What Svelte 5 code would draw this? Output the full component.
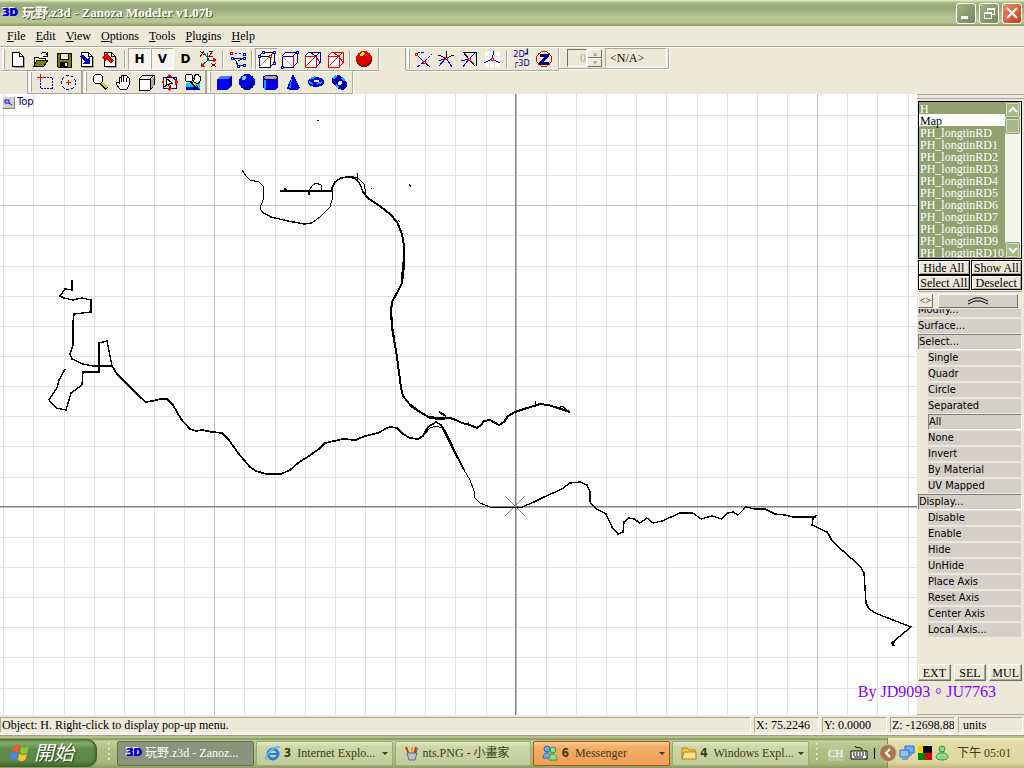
<script lang="ts">
  type Item = { icon: string; label: string; pressed?: boolean } | null;

  const menus = ["File", "Edit", "View", "Options", "Tools", "Plugins", "Help"];

  const page = '<path d="M3.500 2.500h7l4 4v10h-11z" fill="#fff" stroke="#000"/><path d="M10.500 2.500v4h4" fill="none" stroke="#000"/><path d="M15.500 7v10.500H5" fill="none" stroke="#aca899"/>';
  const cubeLines = (c: string) =>
    `<path d="M2 6h11v11H2zM2 6l4-4h11l-4 4M17 2v11l-4 4" fill="#fff" stroke="${c}"/>`;
  const dot = (x: number, y: number, c = "#f00") =>
    `<rect x="${x - 1}" y="${y - 1}" width="2" height="2" fill="#fff" stroke="${c}"/>`;

  const icons: Record<string, string> = {
    new: page,
    open: '<path d="M2 15V7h4l1 1h6v2" fill="#ffff80" stroke="#000"/><path d="M2 16l3-6h11l-4 6z" fill="#808000" stroke="#000"/><path d="M9 4c2-3 5-2 6 1M15 2v4h-4" fill="none" stroke="#000"/>',
    save: '<path d="M2 3h14v14H3l-1-1z" fill="#808000" stroke="#000"/><path d="M5 3h8v6H5z" fill="#ece9d8" stroke="#000"/><path d="M5 12h8v5H5z" fill="#000"/><path d="M10 13h2v3h-2z" fill="#fff"/>',
    import: page + '<path d="M1 6l4-1 4 4 3-2v7H5l2-3z" fill="#0000d0"/>',
    export: page + '<path d="M1 7l6-5v3l6 5-3 4-4-5-1 3z" fill="#e00000"/>',
    axes: '<path d="M8 11V3M8 11l-6 5M8 11l8-1M5 3l5 7" fill="none" stroke="#006060"/><path d="M14 8l3 2-3 2zM2 13v3h4" fill="red" stroke="red"/><path d="M1 1l4 4M5 1L1 7M10 1h4l-4 5h4M12 13l5 4M17 13l-5 4" fill="none" stroke="#900000"/>',
    nodes: '<path d="M3 3h13" stroke="#00f" stroke-dasharray="2 2"/><path d="M5 8h11M5 8l3 3 2 5 6-1M16 8l-6 3" fill="none" stroke="#000080"/>' + dot(3, 3) + dot(16, 4, "#00f") + dot(4, 8, "#00f") + dot(16, 8, "#00f") + dot(10, 16, "#00f") + dot(16, 15, "#00f"),
    cubeVertex: cubeLines("#000") + '<path d="M2 17L13 6" stroke="#888"/>' + dot(13, 6) + dot(17, 2, "#00f") + dot(17, 13, "#00f") + dot(2, 6, "#00f") + dot(6, 2, "#00f"),
    cubeEdge: cubeLines("#0000a0") + '<path d="M2 6l11 11" stroke="#aaa"/><path d="M13 6v11" stroke="red"/>' + dot(2, 17, "#00f") + dot(17, 2, "#00f"),
    cubeFace: cubeLines("#000080") + '<path d="M2 6h11v11H2zM2 17L13 6" fill="none" stroke="red"/><path d="M13 6l4 7M6 2l7 4" stroke="#000080"/>',
    cubeObject: cubeLines("red") + '<path d="M2 17L13 6l4 7M6 2l7 4" fill="none" stroke="red"/>',
    ball: '<circle cx="9" cy="9" r="8" fill="#e00000"/><path d="M2 13a8 8 0 0014 0 8 8 0 001-5c-3 8-9 9-15 5z" fill="#800000"/><path d="M4 5l3-3 3 1-2 3H5z" fill="#ff0"/>',
    snap1: '<path d="M2 4l4-2h4M10 12l8-8M3 17l7-5" fill="none" stroke="#00f" stroke-dasharray="4 1"/><path d="M3 5l7 7 6 5" fill="none" stroke="#000080"/>' + dot(2, 4) + dot(10, 12),
    snap2: '<path d="M1 5l8 3 8-3M9 1v7" fill="none" stroke="#000"/><path d="M2 11l7-3M2 16l7-8 6 9" fill="none" stroke="#00f"/>' + dot(9, 8),
    snap3: '<path d="M3 2h13v14M4 4l5 5M9 9l6 7M3 2l6 7" fill="none" stroke="#000"/><path d="M1 11l8-2 7-7M9 9l-6 8" fill="none" stroke="#00f"/>' + dot(9, 9),
    snap4: '<path d="M2 2h15v15H2z" fill="#fff"/><path d="M6 2v15M11 2v15M2 6h15M2 12h15" stroke="#e8e4d4"/><path d="M9 9l2-8M9 9l-8 4M9 9l8 4" fill="none" stroke="#00f"/>' + dot(9, 9),
    zmod: '<circle cx="9" cy="9" r="7.500" fill="none" stroke="red"/><path d="M5 4h9v2l-6 6h6v3H4v-3l6-5H5z" fill="#000080"/>',
    selRect: '<path d="M4.500 4.500h12v11h-12z" fill="none" stroke="#0000a0" stroke-dasharray="2 1"/><path d="M4.500 1v7M1 4.500h7" stroke="red"/>',
    selCircle: '<circle cx="9.500" cy="9.500" r="7" fill="none" stroke="#0000a0" stroke-dasharray="3 2"/><path d="M9.500 7v5M7 9.500h5" stroke="red"/>',
    zoom: '<circle cx="7" cy="6" r="5" fill="#fff" stroke="#000"/><path d="M10 10l6 6" stroke="#000" stroke-width="4"/><path d="M11 10l5 5" stroke="#cc0" stroke-width="2"/>',
    hand: '<path d="M6 16L2 11l1-2 2 1V5l2-1V3l2-1 2 0 2 1v1l2 1v7l-2 4z" fill="#fff" stroke="#000"/><path d="M7.500 4v5M9.500 3v6M12.500 5v4" stroke="#000"/>',
    cube: '<path d="M2 6l4-4h11v10l-4 5H2z" fill="#fff" stroke="#000"/><path d="M14 7l3-4v9l-3 4z" fill="#aca899"/><path d="M2 6h11v11M13 6l4-4" fill="none" stroke="#000"/>',
    fit: '<path d="M3 4h13v11H3zM3 15l4-3M12 4l4 3" fill="none" stroke="#000080"/><path d="M6 4l3-3 3 3zM6 15l3 3 3-3zM4 6L1 9l3 3zM15 6l3 3-3 3z" fill="red"/><path d="M6 5v8l2-2 2 4 1-1-2-4h3z" fill="#fff" stroke="#000"/>',
    render: '<path d="M3 10h14v7H3z" fill="#0cf"/><path d="M3 14h9l5 2v1H3z" fill="#0000c0"/><circle cx="6" cy="5" r="4" fill="#fff" stroke="#000"/><path d="M8 8l6 7" stroke="#000" stroke-width="3"/><path d="M9 8l5 6" stroke="#dd0" stroke-width="1"/><path d="M11 9L9 6l1-1 1 1V2l1 1 1-2 1 1 1-1 1 2 1 0v5l-2 3z" fill="#fff" stroke="#000"/>',
    box: '<path d="M2 6l4-3h11v9l-4 5H2z" fill="#0000a8"/><path d="M2 6h11v11H2z" fill="#00f"/><path d="M6 3h11l-4 3H2z" fill="#4080ff"/>',
    sphere: '<circle cx="9" cy="9" r="8" fill="#0000e0"/><path d="M3 14c6 2 11-1 13-8a8 8 0 01-13 8z" fill="#000080"/><circle cx="6" cy="5" r="2" fill="#80d0ff"/>',
    cylinder: '<path d="M2 4v11c2 3 13 3 15 0V4z" fill="#0000e0"/><path d="M4 7v9" stroke="#0af" stroke-width="2"/><ellipse cx="9.500" cy="4.500" rx="7" ry="2.500" fill="#aca899" stroke="#00008b"/>',
    cone: '<path d="M9 1l7 14c-2 3-12 3-13 0z" fill="#0000e0"/><path d="M8 4L5 15h2z" fill="#0af"/>',
    torus: '<ellipse cx="9" cy="9" rx="8" ry="5" fill="#0000c8"/><path d="M3 6l5-2M2 9l4 2M10 11l5-2" stroke="#0af" stroke-width="2"/><ellipse cx="9" cy="8" rx="3" ry="1" fill="#ece9d8"/>',
    knot: '<path d="M5 3l4-1 8 7v4l-4 4-5-1-6-7V5z" fill="#0000b0"/><path d="M3 6l3-3M6 12l3 3M12 5l3 3" stroke="#0af" stroke-width="2"/><circle cx="10" cy="10" r="2" fill="#ece9d8"/>',
  };

  const fileBar: Item[] = [
    { icon: "new", label: "New" },
    { icon: "open", label: "Open" },
    { icon: "save", label: "Save" },
    { icon: "import", label: "Import" },
    { icon: "export", label: "Export" },
    null,
    { icon: "H", label: "Horizontal", pressed: true },
    { icon: "V", label: "Vertical", pressed: true },
    { icon: "D", label: "Depth" },
    { icon: "axes", label: "Axes" },
    null,
    { icon: "nodes", label: "Nodes" },
    null,
    { icon: "cubeVertex", label: "Vertices level", pressed: true },
    { icon: "cubeEdge", label: "Edges level" },
    { icon: "cubeFace", label: "Faces level" },
    { icon: "cubeObject", label: "Objects level" },
    null,
    { icon: "ball", label: "Material editor" },
  ];
  const snapBar: Item[] = [
    { icon: "snap1", label: "Snap to vertex" },
    { icon: "snap2", label: "Snap to edge" },
    { icon: "snap3", label: "Snap to face" },
    { icon: "snap4", label: "Snap to grid" },
    null,
    { icon: "2D", label: "2D / 3D" },
    { icon: "zmod", label: "Zanoza" },
  ];
  const selectBar: Item[] = [
    { icon: "selRect", label: "Rectangle selection" },
    { icon: "selCircle", label: "Circle selection" },
  ];
  const viewBar: Item[] = [
    { icon: "zoom", label: "Zoom" },
    { icon: "hand", label: "Pan" },
    { icon: "cube", label: "Rotate" },
    { icon: "fit", label: "Fit" },
    { icon: "render", label: "Render" },
  ];
  const primBar: Item[] = [
    { icon: "box", label: "Box" },
    { icon: "sphere", label: "Sphere" },
    { icon: "cylinder", label: "Cylinder" },
    { icon: "cone", label: "Cone" },
    { icon: "torus", label: "Torus" },
    { icon: "knot", label: "Knot" },
  ];

  const objects = ["H", "Map", "PH_longtinRD"];
  for (let i = 1; i <= 10; i++) objects.push("PH_longtinRD" + i);
  let selected = $state(objects.filter((o) => o !== "Map"));

  const commands = [
    { text: "Modify..." },
    { text: "Surface..." },
    { text: "Select...", open: true },
    ...["Single", "Quadr", "Circle", "Separated"].map((text) => ({ text, sub: true })),
    { text: "All", sub: true, open: true },
    ...["None", "Invert", "By Material", "UV Mapped"].map((text) => ({ text, sub: true })),
    { text: "Display...", open: true },
    ...["Disable", "Enable", "Hide", "UnHide", "Place Axis", "Reset Axis", "Center Axis", "Local Axis..."].map(
      (text) => ({ text, sub: true }),
    ),
  ] as { text: string; sub?: boolean; open?: boolean }[];

  // grid lines of the top view, in view units
  const gridX = [3, 33, 64, 94, 124, 154, 184, 244, 275, 305, 335, 365, 395, 425, 455, 486, 546, 576, 606, 636, 666, 697, 727, 757, 787, 847, 877, 908];
  const gridY = [115, 145, 175, 235, 266, 296, 326, 356, 386, 416, 446, 477, 537, 567, 597, 627, 657, 688];

  const thinRoads = [
    "242,170 246,176 250,180 259,182 263,186 264,192 263,200 260,208 262,212 271,217 288,221 304,224 312,223 320,217 330,207 332,200 332,188 335,182 341,178 350,176 358,178 364,184 366,193",
    "309,191 312,186 316,183 321,185 321,191",
    "403,396 409,403 418,410 428,416 440,418 447,417",
    "423,436 430,428 436,426 442,428",
    "357,173 358,180",
    "468,425 469,422",
    "535,405 536,401",
    "559,408 562,406 570,412",
    "398,220 400,222",
    "409,184 411,187",
    "317,120 319,120",
    "371,188 372,188",
    "442,428 455,454 464,470 470,480 474,491 475,498 480,503 490,507 522,507",
  ];
  const roads = [
    "262,212 271,217 288,221 304,224 312,223",
    "332,192 332,188 335,182 341,178 350,177 356,179 360,184 363,192 368,198",
    "522,507 534,502 544,497 562,489 570,483 580,482 587,485 590,492 590,502 595,508 606,514 612,527 618,534 623,532 624,522 629,518 634,519 640,523 647,518 653,523 662,521 680,513 693,513 701,519 712,516 722,519 728,513 733,512 738,515 746,507 755,509 765,509 775,514 785,515 793,517 815,517 816,515 813,519 812,525 827,532 832,541 843,551 860,566 864,573 866,603 869,609 875,613 911,627 894,641",
    "72,280 72,290 65,289 60,296 64,298 73,300 82,298 91,300 91,312 74,314 73,322 73,345 70,354 72,359 83,364 93,366 112,366",
    "66,369 64,371 59,380 57,388 49,400 56,408 66,410 71,393 82,385 83,372 99,372 99,343 107,341 112,366",
  ];
  const wideRoads = [
    "112,366 117,374 126,383 134,391 141,398 146,402 153,401 160,399 167,399 173,405 181,419 190,429 196,431 202,430 212,432 222,433 229,440 238,453 250,467 256,471 266,474 281,474 290,470 298,463 309,456 319,449 325,443 334,441 343,439 356,440 365,436 378,433 387,428 391,427 397,428 403,434 410,438 418,439 423,436 428,427 436,422 441,425 446,433 455,452 464,470",
  ];
  const thickRoads = [
    "280,191 333,191",
    "284,189 287,190",
    "309,191 309,195",
    "363,192 368,198 381,207 390,214 397,222 402,234 404,246 404,266 402,283 398,291 392,302 391,312 392,328 397,357 401,388 403,396 411,406 420,412 430,418 440,419 450,418 456,420 462,423 470,425 477,428 481,425 484,421 490,420 499,425 504,422 508,416 515,412 524,409 534,406 540,404 548,405 558,408 570,412",
    "403,262 402,282",
    "391,306 392,326 397,357",
    "439,412 446,416",
    "418,439 423,436 428,427",
    "441,425 446,433 455,452",
    "828,533 832,541",
    "895,641 892,643 894,646",
  ];
</script>

{#snippet glyph(name: string)}
  <svg width="19" height="19" viewBox="0 0 19 19" shape-rendering="crispEdges" aria-hidden="true">
    {@html icons[name]}
  </svg>
{/snippet}

{#snippet band(items: Item[])}
  <div class="band">
    <span class="grip"></span>
    {#each items as item}
      {#if !item}
        <span class="sep"></span>
      {:else}
        <button class="tool" class:pressed={item.pressed} aria-label={item.label} title={item.label}>
          {#if item.icon === "2D"}
            <span class="dims">2D&#9499;<br />&#9484;3D</span>
          {:else if item.icon.length === 1}
            <b>{item.icon}</b>
          {:else}
            {@render glyph(item.icon)}
          {/if}
        </button>
      {/if}
    {/each}
  </div>
{/snippet}

{#snippet logo()}
  <span class="logo">3D</span>
{/snippet}

<div class="desktop">
  <header class="title">
    {@render logo()}
    <h1>玩野.z3d - Zanoza Modeler v1.07b</h1>
    <div class="winbtns">
      <button aria-label="Minimize">
        <svg width="18" height="18" viewBox="0 0 18 18"><path d="M4 12h7v3H4z" fill="#fff" /></svg>
      </button>
      <button aria-label="Restore">
        <svg width="18" height="18" viewBox="0 0 18 18" fill="none" stroke="#fff" shape-rendering="crispEdges">
          <path d="M7 7V4h7v6h-3M7 5h7M4 8h7v6H4zM4 9h7" />
        </svg>
      </button>
      <button class="close" aria-label="Close">
        <svg width="18" height="18" viewBox="0 0 18 18"><path d="M4 4l10 10M14 4L4 14" stroke="#fff" stroke-width="2" /></svg>
      </button>
    </div>
  </header>

  <nav class="menu">
    {#each menus as m}
      <button><u>{m[0]}</u>{m.slice(1)}</button>
    {/each}
  </nav>

  <div class="toolbars">
    <div class="bar first">
      {@render band(fileBar)}
      <div class="space"></div>
      {@render band(snapBar)}
      <div class="band fields">
        <input class="num" value="0" aria-label="Value" disabled />
        <span class="spin">
          <button aria-label="Up">&#9652;</button>
          <button aria-label="Down">&#9662;</button>
        </span>
        <output class="na">&lt;N/A&gt;</output>
      </div>
    </div>
    <div class="bar second">
      {@render band(selectBar)}
      {@render band(viewBar)}
      {@render band(primBar)}
    </div>
  </div>

  <main class="work">
    <div class="view">
      <svg class="canvas" viewBox="0 94 917 621" preserveAspectRatio="xMinYMin slice" shape-rendering="crispEdges">
        {#each gridX as x}<rect {x} y="94" width="1" height="621" fill="#e2e2e2" />{/each}
        {#each gridY as y}<rect x="0" {y} width="917" height="1" fill="#e2e2e2" />{/each}
        <path d="M214.500 94V715M817.500 94V715M0 205.500H917" stroke="#c0c0c0" />
        <path d="M516.500 94V715M0 507.500H917" stroke="#c0c0c0" />
        <path d="M515.500 94V715M0 506.500H917" stroke="#808080" />
        <path d="M505 496l20 20M525 496l-20 20" stroke="#808080" />
        {#each thinRoads as points}<polyline {points} class="road" />{/each}
        {#each roads as points}<polyline {points} class="road medium" />{/each}
        {#each wideRoads as points}<polyline {points} class="road wide" />{/each}
        {#each thickRoads as points}<polyline {points} class="road thick" />{/each}
      </svg>
      <div class="viewname">
        <button aria-label="Maximize view">
          <svg width="10" height="10" viewBox="0 0 10 10" fill="none" stroke="#00f"><path d="M2 3h4v3H2zM6 6l3 2" /></svg>
        </button>
        Top
      </div>
    </div>

    <aside class="side">
      <div class="objects">
        <select multiple bind:value={selected} aria-label="Objects">
          {#each objects as o}<option value={o}>{o}</option>{/each}
        </select>
        <div class="scroll">
          <button aria-label="Scroll up">
            <svg width="12" height="12" viewBox="0 0 12 12"><path d="M2 8l4-4 4 4" fill="none" stroke="#fff" stroke-width="2" /></svg>
          </button>
          <span class="thumb"></span>
          <button aria-label="Scroll down">
            <svg width="12" height="12" viewBox="0 0 12 12"><path d="M2 4l4 4 4-4" fill="none" stroke="#fff" stroke-width="2" /></svg>
          </button>
        </div>
      </div>
      <div class="objbtns">
        <button>Hide All</button>
        <button>Show All</button>
        <button>Select All</button>
        <button>Deselect</button>
      </div>
      <div class="roll">
        <button class="swap">&lt;&gt;</button>
        <button class="up" aria-label="Scroll commands up">
          <svg width="22" height="9" viewBox="0 0 22 9" fill="none" stroke="#000">
            <path d="M1 5l7-3h6l7 3M1 8l7-3h6l7 3" />
          </svg>
        </button>
      </div>
      <div class="commands">
        {#each commands as c}
          <button class:sub={c.sub} class:open={c.open}>{c.text}</button>
        {/each}
      </div>
      <div class="modes">
        <button>EXT</button>
        <button>SEL</button>
        <button>MUL</button>
      </div>
    </aside>
    <p class="credit">By JD9093。JU7763</p>
  </main>

  <footer class="status">
    <span class="hint">Object: H. Right-click to display pop-up menu.</span>
    <span>X: 75.2246</span>
    <span>Y: 0.0000</span>
    <span>Z: -12698.884</span>
    <span class="units">units</span>
  </footer>

  <div class="taskbar">
    <button class="start">
      <svg width="20" height="20" viewBox="0 0 20 20">
        <path d="M4 3c3-2 5-1 6 0L9 9C7 8 5 8 2 9z" fill="#f0582a" />
        <path d="M11 4c2 1 5 1 8-1l-2 7c-3 1-5 1-7 0z" fill="#8cc63f" />
        <path d="M1 10c3-1 5-1 7 0l-1 7c-2-1-5-1-7 0z" fill="#4a86e8" />
        <path d="M9 11c2 1 5 1 8 0l-2 6c-3 2-5 1-7 0z" fill="#fbc726" />
      </svg>
      開始
    </button>
    <span class="dots"></span>
    <div class="tasks">
      <button class="task active">{@render logo()}<span>玩野.z3d - Zanoz...</span></button>
      <button class="task">
        <svg width="16" height="16" viewBox="0 0 16 16" fill="none">
          <circle cx="8" cy="9" r="5" stroke="#2b7fd0" stroke-width="3" />
          <path d="M4 9h9" stroke="#2b7fd0" stroke-width="2" />
          <path d="M1 15C0 9 9 1 15 2" stroke="#6bb8f0" stroke-width="2" />
        </svg>
        <span><b>3</b>&nbsp; Internet Explo...</span><i></i>
      </button>
      <button class="task">
        <svg width="16" height="16" viewBox="0 0 16 16">
          <path d="M6 12L2 2M12 2l-2 10" stroke="#d03010" stroke-width="2" />
          <path d="M8 12V2" stroke="#e8a020" stroke-width="2" />
          <path d="M10 12l4-9" stroke="#3060c0" />
          <path d="M3 8h10l-2 7H5z" fill="#b4c4d8" stroke="#667" />
        </svg>
        <span>nts.PNG - 小畫家</span>
      </button>
      <button class="task alert">
        <svg width="16" height="16" viewBox="0 0 16 16">
          <circle cx="5" cy="4" r="3" fill="#6ab0e8" stroke="#2a6cb0" />
          <path d="M1 13c0-7 8-7 8 0z" fill="#6ab0e8" stroke="#2a6cb0" />
          <circle cx="11" cy="5" r="3" fill="#90dd88" stroke="#389038" />
          <path d="M7 15c0-8 8-8 8 0z" fill="#90dd88" stroke="#389038" />
        </svg>
        <span><b>6</b>&nbsp; Messenger</span><i></i>
      </button>
      <button class="task">
        <svg width="16" height="16" viewBox="0 0 16 16">
          <path d="M1 13V3h5l2 2h6v8z" fill="#f4c64a" stroke="#b08010" />
          <path d="M1 14l2-7h12v7z" fill="#ffe28a" stroke="#b08010" />
        </svg>
        <span><b>4</b>&nbsp; Windows Expl...</span><i></i>
      </button>
    </div>
    <span class="dots"></span>
    <div class="lang">
      <span class="ch">CH</span>
      <svg width="18" height="16" viewBox="0 0 18 16">
        <path d="M5 1c0 3 7 0 7 4" fill="none" stroke="#000" />
        <path d="M1 6h16v8H1z" fill="#fff" stroke="#000" />
        <path d="M3 8h13M3 10h13" stroke="#000" stroke-dasharray="2 1" />
        <path d="M4 12h9" stroke="#000" />
      </svg>
      <span class="bar-mark"></span>
    </div>
    <div class="tray">
      <button class="expand" aria-label="Show hidden icons">
        <svg width="10" height="10" viewBox="0 0 10 10"><path d="M7 1L3 5l4 4" fill="none" stroke="#fff" stroke-width="2" /></svg>
      </button>
      <svg width="16" height="16" viewBox="0 0 16 16">
        <path d="M6 1h9v7H6zM9 10h4" fill="#6cb0ff" stroke="#3068c0" />
        <path d="M1 5h9v7H1zM3 14h6" fill="#8cc8ff" stroke="#3068c0" />
      </svg>
      <svg width="14" height="14" viewBox="0 0 14 14">
        <path d="M0 0h5v7H0z" fill="#fc0" /><path d="M5 0h9v7H5z" fill="#000" />
        <path d="M0 7h7v7H0z" fill="#080" /><path d="M7 7h7v7H7z" fill="#e00000" />
      </svg>
      <svg width="14" height="16" viewBox="0 0 14 16">
        <circle cx="7" cy="4" r="3" fill="#8cd88c" stroke="#389038" />
        <path d="M1 12c0-2 3-5 6-4 3-1 6 2 6 4 0 4-12 4-12 0z" fill="#8cd88c" stroke="#389038" />
      </svg>
      <time>下午 05:01</time>
    </div>
  </div>
</div>

<style>
  :global(body) {
    margin: 0;
    background: #ece9d8;
  }

  .desktop {
    display: flex;
    flex-direction: column;
    height: 100vh;
    overflow: hidden;
    background: #ece9d8;
    color: #000;
    font: 12px/14px "Liberation Serif", "Noto Sans CJK TC", serif;
  }

  button,
  input,
  select {
    box-sizing: border-box;
    margin: 0;
    padding: 0;
    border: 0;
    border-radius: 0;
    background: none;
    color: inherit;
    font: inherit;
  }

  svg {
    display: block;
    flex: none;
  }

  .title {
    display: flex;
    align-items: center;
    gap: 4px;
    box-sizing: border-box;
    height: 26px;
    padding: 0 2px;
    background: linear-gradient(#e4f0c0 0, #a5b483 3px, #97a679 7px, #b5c490 17px, #b9c693 22px, #8b9a68 26px);
  }

  h1 {
    flex: 1;
    margin: 0;
    color: #fff;
    font-size: 13px;
    font-weight: bold;
    text-shadow: 1px 1px 0 #4d5a30;
  }

  .logo {
    flex: none;
    width: 16px;
    color: #0000d8;
    font: bold 10px/12px "DejaVu Sans", sans-serif;
    text-shadow: 1px 0 0 #0000d8, -1px -1px 0 #fff;
  }

  .winbtns {
    display: flex;
    gap: 3px;
  }

  .winbtns button {
    width: 20px;
    height: 21px;
    border: 1px solid #fff;
    border-radius: 3px;
    background: linear-gradient(135deg, #a3b184, #75875a);
  }

  .winbtns .close {
    background: linear-gradient(135deg, #ec8a6a, #c83c18);
  }

  .menu {
    display: flex;
    height: 20px;
    padding-left: 2px;
    border-bottom: 1px solid #aca899;
    box-shadow: 0 1px #fff;
  }

  .menu button {
    padding: 0 5px;
  }

  .toolbars {
    margin-top: 1px;
  }

  .bar {
    display: flex;
    align-items: flex-start;
    height: 23px;
  }

  .band {
    display: flex;
    align-items: center;
    box-sizing: border-box;
    height: 23px;
    padding-right: 2px;
    border-right: 1px solid #aca899;
    border-bottom: 1px solid #aca899;
    box-shadow: 1px 1px 0 #fff;
  }

  .grip {
    width: 2px;
    height: 20px;
    margin: 0 2px 0 1px;
    border-right: 1px solid #aca899;
    background: #fff;
  }

  .first {
    padding-left: 1px;
  }

  .second {
    padding-left: 27px;
  }

  .second .band {
    border-left: 1px solid #aca899;
    padding-right: 1px;
  }

  .space {
    width: 26px;
    border-right: 1px solid #aca899;
    height: 22px;
  }

  .sep {
    width: 1px;
    height: 18px;
    margin: 0 3px 0 2px;
    background: #aca899;
    box-shadow: 1px 0 #fff;
  }

  .tool {
    display: grid;
    place-items: center;
    width: 23px;
    height: 22px;
  }

  .tool.pressed {
    border: 1px solid;
    border-color: #aca899 #fff #fff #aca899;
    background: #f6f4ec;
  }

  .tool b {
    font: bold 12px/14px "DejaVu Sans", sans-serif;
  }

  .dims {
    color: #000080;
    font: 9px/9px "DejaVu Sans Condensed", sans-serif;
    white-space: nowrap;
  }

  .fields {
    height: 21px;
    padding: 0 1px 0 8px;
  }

  .num {
    width: 20px;
    height: 18px;
    border: 1px solid;
    border-color: #716f64 #fff #fff #716f64;
    color: #aca899;
    text-align: right;
  }

  .spin {
    display: grid;
    width: 15px;
    margin-right: 3px;
  }

  .spin button {
    height: 9px;
    border: 1px solid;
    border-color: #fff #716f64 #716f64 #fff;
    color: #aca899;
    font-size: 8px;
    line-height: 6px;
  }

  .na {
    box-sizing: border-box;
    width: 62px;
    height: 20px;
    padding: 2px 4px;
    border: 1px solid;
    border-color: #aca899 #fff #fff #aca899;
  }

  .work {
    position: relative;
    display: flex;
    flex: 1;
    min-height: 0;
  }

  .view {
    position: relative;
    flex: 1;
    min-width: 0;
    overflow: hidden;
    background: #fff;
  }

  .canvas {
    width: 100%;
    height: 100%;
  }

  .road {
    fill: none;
    stroke: #000;
    stroke-width: 1;
  }

  .medium {
    stroke-width: 1.4;
  }

  .wide {
    stroke-width: 1.7;
  }

  .thick {
    stroke-width: 2;
  }

  .viewname {
    position: absolute;
    top: 1px;
    left: 2px;
    display: flex;
    align-items: center;
    gap: 2px;
    color: #000080;
    font: 11px/14px "DejaVu Sans Condensed", sans-serif;
  }

  .viewname button {
    width: 13px;
    height: 13px;
    border: 1px solid;
    border-color: #fff #808080 #808080 #fff;
    background: #d4d0c8;
  }

  .side {
    display: flex;
    flex-direction: column;
    box-sizing: border-box;
    width: 107px;
    padding: 6px 2px 2px 1px;
    border-top: 1px solid #aca899;
    border-bottom: 1px solid #aca899;
    background: linear-gradient(#aca899, #aca899) 0 3px / 100% 1px no-repeat #ece9d8;
  }

  .objects {
    display: flex;
    box-sizing: border-box;
    height: 158px;
    flex: none;
    border: 1px solid #000;
    background: #fff;
  }

  .objects select {
    flex: 1;
    min-width: 0;
    height: 156px;
    overflow: hidden;
    outline: none;
  }

  .objects option {
    min-height: 12px;
    height: 12px;
    padding: 0 0 0 1px;
    font-size: 12px;
    line-height: 10px;
  }

  .objects option:checked {
    background-image: linear-gradient(#93a070, #93a070);
    -webkit-text-fill-color: #fff;
  }

  .scroll {
    display: flex;
    flex-direction: column;
    width: 16px;
    background: #f4f4ee;
  }

  .scroll button,
  .thumb {
    display: grid;
    box-sizing: border-box;
    place-items: center;
    width: 15px;
    height: 16px;
    border: 1px solid #8f9d71;
    border-radius: 2px;
    background: #a8b68a;
    box-shadow: inset 0 0 0 1px #d4deb8;
  }

  .scroll button:last-child {
    margin-top: auto;
  }

  .objbtns {
    display: grid;
    grid-template-columns: 1fr 1fr;
    gap: 0 1px;
    flex: none;
    margin-top: 1px;
    padding-bottom: 1px;
    border-bottom: 1px solid #aca899;
  }

  .objbtns button {
    height: 15px;
    border: 1px solid #000;
    box-shadow: inset 1px 1px #fff, inset -1px -1px #aca899;
    line-height: 12px;
    white-space: nowrap;
  }

  .roll {
    display: flex;
    align-items: center;
    gap: 5px;
    flex: none;
    height: 17px;
    padding-right: 4px;
  }

  .roll button {
    height: 14px;
    border: 1px solid;
    border-color: #fff #716f64 #716f64 #fff;
    font-size: 10px;
    line-height: 10px;
  }

  .swap {
    width: 15px;
  }

  .roll .up {
    display: grid;
    flex: 1;
    place-items: center;
    background: #d4d0c8;
  }

  .commands {
    display: flex;
    flex: 1;
    flex-direction: column;
    justify-content: flex-start;
    min-height: 0;
    overflow: hidden;
  }

  .commands button {
    flex: none;
    height: 16px;
    border: 1px solid #ece9d8;
    border-width: 1px 1px 1px 0;
    background: #d4d0c8;
    font: 11px/14px "DejaVu Sans Condensed", sans-serif;
    text-align: left;
  }

  .commands button:first-child {
    margin-top: -7px;
  }

  .commands .sub {
    margin-left: 10px;
  }

  .commands .open {
    border-width: 1px;
    border-color: #808080 #fff #fff #808080;
  }

  .modes {
    display: grid;
    grid-template-columns: 1fr 1fr 1fr;
    gap: 3px;
    flex: none;
    margin-bottom: 31px;
  }

  .modes button {
    height: 17px;
    border: 1px solid;
    border-color: #fff #716f64 #716f64 #fff;
    box-shadow: inset -1px -1px #aca899;
    line-height: 14px;
  }

  .credit {
    position: absolute;
    right: 28px;
    bottom: 13px;
    margin: 0;
    color: #8000ff;
    font-size: 16px;
    line-height: 20px;
  }

  .status {
    display: flex;
    gap: 3px;
    box-sizing: border-box;
    height: 20px;
    padding: 2px 1px 1px 0;
    border-bottom: 1px solid #fff;
  }

  .status span {
    box-sizing: border-box;
    flex: none;
    width: 65px;
    overflow: hidden;
    padding: 0 1px;
    border: 1px solid;
    border-color: #aca899 #fff #fff #aca899;
    white-space: nowrap;
  }

  .status .hint {
    flex: 1;
  }

  .status .units {
    padding-left: 4px;
  }

  .taskbar {
    display: flex;
    align-items: center;
    box-sizing: border-box;
    height: 33px;
    padding-top: 3px;
    background: linear-gradient(#8c8e70 0, #c5d09c 2px, #7f9158 4px, #c5d09c 6px, #b2bf88 14px, #a9b77e 28px, #8c9c62 33px);
    color: #3b3c10;
  }

  .start {
    display: flex;
    align-items: center;
    gap: 4px;
    flex: none;
    width: 97px;
    height: 28px;
    padding-left: 10px;
    border-radius: 0 10px 10px 0;
    background: linear-gradient(#4c7a38, #86ac6c 4px, #5f8c4a 10px, #5c8647 22px, #3d6328);
    box-shadow: inset -2px 0 2px #3d6328;
    color: #fff;
    font-size: 20px;
    font-style: italic;
    line-height: 26px;
    text-shadow: 1px 1px 1px #234010;
  }

  .dots {
    flex: none;
    width: 5px;
    height: 20px;
    margin: 0 4px 0 11px;
    background: radial-gradient(circle at 1px 1px, #e2e8c4 1px, #7d8d54 2px, transparent 2px) 0 0 / 5px 5px;
  }

  .tasks {
    display: flex;
    gap: 2px;
    flex: 1;
    min-width: 0;
  }

  .tasks + .dots {
    margin: 0 7px;
  }

  .task {
    display: flex;
    align-items: center;
    gap: 3px;
    flex: 1 1 0;
    min-width: 0;
    height: 25px;
    padding: 0 4px 0 8px;
    border: 1px solid #9dab76;
    border-radius: 2px;
    background: linear-gradient(#e2e8c4, #ccd6a8 5px, #c1cb9b);
    text-align: left;
    white-space: nowrap;
  }

  .task span:not(.logo) {
    flex: 1;
    overflow: hidden;
  }

  .task b {
    font: bold 12px/14px "DejaVu Sans Condensed", sans-serif;
  }

  .task i {
    border: 3px solid transparent;
    border-top-color: #3b3c10;
    border-bottom: 0;
  }

  .task.active {
    border-color: #66704e;
    background: #8b947a;
    color: #fff;
  }

  .task.alert {
    border: 1px solid #b0560a;
    background: linear-gradient(#fbd09a, #f5ad68 5px, #f0a058);
  }

  .lang {
    display: flex;
    align-items: center;
    gap: 6px;
    flex: none;
    width: 59px;
  }

  .ch {
    width: 16px;
    background: #b9c59a;
    color: #fff;
    font-size: 11px;
    line-height: 16px;
  }

  .bar-mark {
    width: 1px;
    height: 11px;
    background: #000;
  }

  .tray {
    display: flex;
    align-items: center;
    gap: 3px;
    box-sizing: border-box;
    flex: none;
    width: 137px;
    height: 30px;
    border-left: 1px solid #7d8d54;
    background: linear-gradient(#f2ecc0, #e2dcaa 5px, #ded7a2 24px, #c0b680);
  }

  .expand {
    display: grid;
    place-items: center;
    flex: none;
    width: 16px;
    height: 16px;
    margin-left: -8px;
    border-radius: 50%;
    background: #a87850;
    box-shadow: 0 0 0 1px #d8b898;
  }

  time {
    margin-left: 5px;
    white-space: nowrap;
  }
</style>
